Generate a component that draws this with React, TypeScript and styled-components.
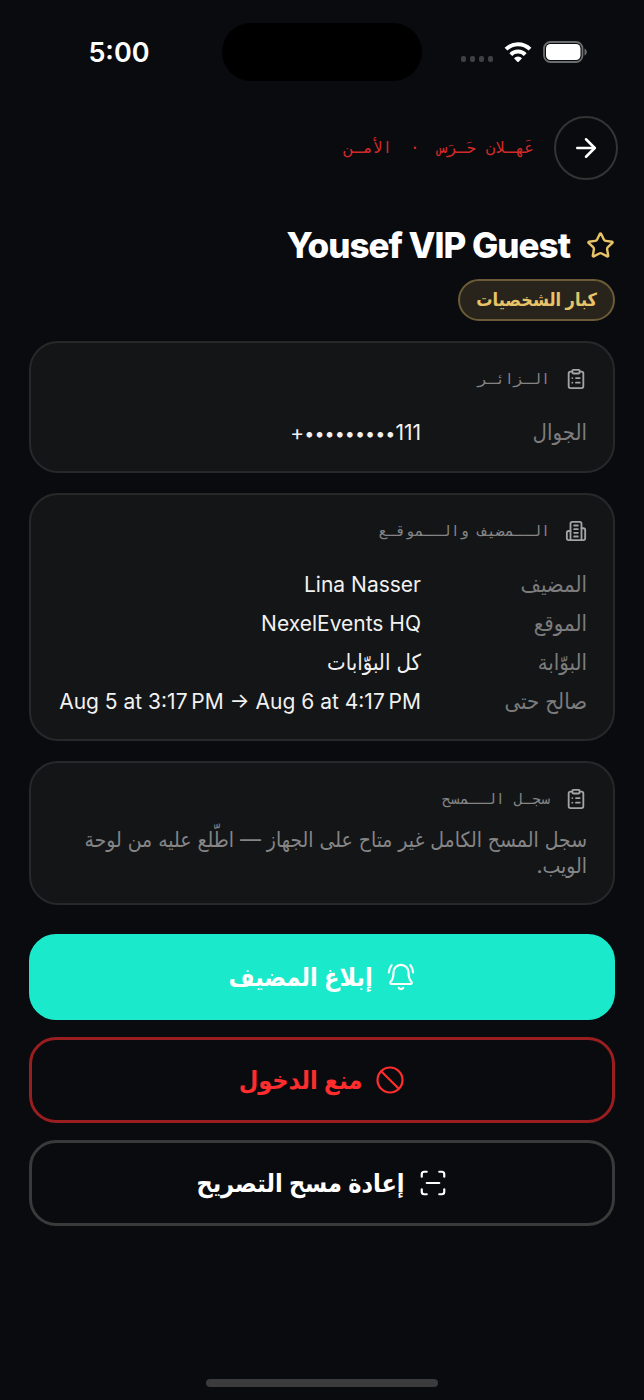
import React from "react";
import styled, { createGlobalStyle } from "styled-components";
import { ArrowRight, Ban, ClipboardList, ScanLine, Star } from "lucide-react";

const GlobalStyle = createGlobalStyle`
  *, *::before, *::after { box-sizing: border-box; }
  body {
    margin: 0;
    background: #0a0b0e;
    color: #f4f4f4;
    font-family: Inter, "DejaVu Sans Condensed", "DejaVu Sans", sans-serif;
  }
  h1, h2, p, dl, dd { margin: 0; }
`;

const Screen = styled.div`
  min-height: 100vh;
  display: flex;
  flex-direction: column;
`;

const StatusBar = styled.div`
  display: grid;
  grid-template-columns: 1fr 200px 1fr;
  align-items: center;
  padding-top: 23px;
`;

const Clock = styled.time`
  padding: 2px 0 0 16px;
  text-align: center;
  font-size: 27px;
  line-height: 32px;
  font-weight: 600;
  color: #fff;
`;

const Island = styled.div`
  height: 58px;
  border-radius: 29px;
  background: #000;
`;

const StatusIcons = styled.div`
  display: flex;
  align-items: center;
  justify-content: flex-end;
  gap: 11px;
  padding-right: 57px;
`;

const TopBar = styled.header`
  display: flex;
  align-items: center;
  gap: 20px;
  padding: 35px 26px 0;
`;

const BackButton = styled.button`
  display: grid;
  place-items: center;
  width: 64px;
  height: 64px;
  padding: 0;
  border: 2px solid #343434;
  border-radius: 50%;
  background: transparent;
  color: #fff;
`;

const Unit = styled.p`
  display: flex;
  gap: 18px;
  font-family: "DejaVu Sans Mono", monospace;
  font-size: 16px;
  line-height: 24px;
  color: #d32a2a;
`;

const Content = styled.main`
  display: flex;
  flex-direction: column;
  gap: 20px;
  padding: 45px 29px 0;
`;

const Identity = styled.section`
  display: flex;
  flex-direction: column;
  align-items: flex-start;
  gap: 14px;
`;

const NameLine = styled.div`
  display: flex;
  align-items: center;
  gap: 16px;
  color: #e8c468;
`;

const Name = styled.h1`
  font-size: 35px;
  line-height: 40px;
  font-weight: 800;
  letter-spacing: -1px;
  color: #fff;
`;

const Badge = styled.span`
  padding: 0 16px;
  border: 2px solid #6b5b36;
  border-radius: 21px;
  background: #28241c;
  color: #e8c468;
  font-size: 18px;
  line-height: 38px;
  font-weight: 600;
`;

const Card = styled.section`
  display: flex;
  flex-direction: column;
  gap: 16px;
  padding: 24px 26px 18px;
  border: 2px solid #27282a;
  border-radius: 29px;
  background: #141517;
`;

const CardHead = styled.div`
  display: flex;
  align-items: center;
  gap: 15px;
  color: #a4a4a5;
`;

const CardTitle = styled.h2`
  font-family: "DejaVu Sans Mono", monospace;
  font-size: 15px;
  line-height: 24px;
  font-weight: 400;
  color: #858586;
`;

const Facts = styled.dl`
  display: flex;
  flex-direction: column;
  padding-top: 6px;
`;

const Fact = styled.div`
  display: flex;
  gap: 20px;
  font-size: 22px;
  line-height: 39px;
  white-space: nowrap;
`;

const Term = styled.dt`
  width: 146px;
  flex: none;
  color: #7c7c7d;
`;

const Value = styled.dd<{ $latin?: boolean }>`
  font-size: ${(p) => (p.$latin ? 21 : 22)}px;
  color: #f1f1f1;
`;

const Mask = styled.span`
  font-size: 18px;
  font-feature-settings: "calt" 0;
`;

const Note = styled.p`
  padding-bottom: 6px;
  font-size: 21px;
  line-height: 26px;
  color: #858586;
`;

const Actions = styled.div`
  display: flex;
  flex-direction: column;
  gap: 17px;
  padding-top: 9px;
`;

const tones = {
  primary: { fill: "#1be9cb", edge: "#1be9cb", ink: "#ffffff" },
  danger: { fill: "transparent", edge: "#981e20", ink: "#ff2d2d" },
  plain: { fill: "transparent", edge: "#3a3a3b", ink: "#ffffff" },
};

const Action = styled.button<{ $tone: keyof typeof tones }>`
  display: flex;
  align-items: center;
  justify-content: center;
  gap: 13px;
  height: 86px;
  border: 3px solid ${(p) => tones[p.$tone].edge};
  border-radius: 27px;
  background: ${(p) => tones[p.$tone].fill};
  color: ${(p) => tones[p.$tone].ink};
  font-family: inherit;
  font-size: 25px;
  font-weight: 600;
`;

const HomeArea = styled.div`
  display: flex;
  justify-content: center;
  margin-top: auto;
  padding: 24px 0 13px;
`;

const HomeBar = styled.div`
  width: 36%;
  height: 8px;
  border-radius: 4px;
  background: #3b3b3d;
`;

function Signal() {
  return (
    <svg width="32" height="20" viewBox="0 0 32 20" fill="#3f4042" aria-hidden="true">
      {[0, 9, 18, 27].map((x) => (
        <rect key={x} x={x} y="14" width="5" height="6" rx="2" />
      ))}
    </svg>
  );
}

function Wifi() {
  return (
    <svg width="28" height="20" viewBox="0 0 28 20" aria-hidden="true">
      <g fill="none" stroke="#fff" strokeWidth="4">
        <path d="M2 7.2a17 17 0 0 1 24 0" />
        <path d="M6.8 12.600a10.200 10.200 0 0 1 14.400 0" />
      </g>
      <path d="M14 20.500l-4-4.300a5.800 5.800 0 0 1 8 0z" fill="#fff" />
    </svg>
  );
}

function Battery() {
  return (
    <svg width="44" height="22" viewBox="0 0 44 22" aria-hidden="true">
      <rect x="1" y="1" width="38.500" height="20" rx="6.500" fill="none" stroke="#6c6d6f" strokeWidth="1.800" />
      <rect x="3" y="3" width="34.500" height="16" rx="4.500" fill="#fff" />
      <path d="M41.500 7.500v7c1.400-.5 2.300-2 2.300-3.500s-.9-3-2.300-3.500z" fill="#6c6d6f" />
    </svg>
  );
}

function Lines({ size, stroke, paths }: { size: number; stroke: number; paths: string[] }) {
  return (
    <svg width={size} height={size} viewBox="0 0 24 24" fill="none" stroke="currentColor" strokeWidth={stroke} strokeLinecap="round" strokeLinejoin="round" aria-hidden="true">
      {paths.map((d) => (
        <path key={d} d={d} />
      ))}
    </svg>
  );
}

const buildingPaths = [
  "M6 22V4a2 2 0 0 1 2-2h8a2 2 0 0 1 2 2v18Z",
  "M6 12H4a2 2 0 0 0-2 2v6a2 2 0 0 0 2 2h2",
  "M18 9h2a2 2 0 0 1 2 2v9a2 2 0 0 1-2 2h-2",
  "M10 6h4",
  "M10 10h4",
  "M10 14h4",
  "M10 18h4",
];

const bellPaths = [
  "M12 2.300a6 6 0 0 0-6 6c0 4.300-.8 5.800-2.300 7.400-.7.800-.3 1.900.8 1.900h15c1.100 0 1.500-1.100.8-1.900-1.500-1.600-2.300-3.100-2.300-7.400a6 6 0 0 0-6-6Z",
  "M10.200 20.700a2.200 2.200 0 0 0 3.600 0",
  "M4.500 2.500C3.200 4.100 2.400 6 2.300 8.400",
  "M19.500 2.500c1.300 1.600 2.100 3.500 2.200 5.900",
];

const hostFacts = [
  { term: "المضيف", value: "Lina Nasser", latin: true },
  { term: "الموقع", value: "NexelEvents HQ", latin: true },
  { term: "البوّابة", value: "كل البوّابات", latin: false },
  { term: "صالح حتى", value: "Aug 5 at 3:17\u202fPM → Aug 6 at 4:17\u202fPM", latin: true },
];

export default function App() {
  return (
    <Screen dir="rtl" lang="ar">
      <GlobalStyle />
      <StatusBar dir="ltr">
        <Clock>5:00</Clock>
        <Island />
        <StatusIcons>
          <Signal />
          <Wifi />
          <Battery />
        </StatusIcons>
      </StatusBar>
      <TopBar>
        <BackButton type="button" aria-label="رجوع">
          <ArrowRight size={30} strokeWidth={2} />
        </BackButton>
        <Unit>
          <span>عَهـلان حَـرَس</span>
          <span>·</span>
          <span>الأمـن</span>
        </Unit>
      </TopBar>
      <Content>
        <Identity>
          <NameLine>
            <Star size={29} strokeWidth={2} />
            <Name dir="ltr">Yousef VIP Guest</Name>
          </NameLine>
          <Badge>كبار الشخصيات</Badge>
        </Identity>
        <Card>
          <CardHead>
            <ClipboardList size={22} strokeWidth={2} />
            <CardTitle>الـزائـر</CardTitle>
          </CardHead>
          <Facts>
            <Fact>
              <Term>الجوال</Term>
              <Value dir="ltr" $latin>
                +<Mask>•••••••••</Mask>111
              </Value>
            </Fact>
          </Facts>
        </Card>
        <Card>
          <CardHead>
            <Lines size={22} stroke={2} paths={buildingPaths} />
            <CardTitle>الــمضيف والــموقـع</CardTitle>
          </CardHead>
          <Facts>
            {hostFacts.map((f) => (
              <Fact key={f.term}>
                <Term>{f.term}</Term>
                <Value dir="auto" $latin={f.latin}>
                  {f.value}
                </Value>
              </Fact>
            ))}
          </Facts>
        </Card>
        <Card>
          <CardHead>
            <ClipboardList size={22} strokeWidth={2} />
            <CardTitle>سجـل الــمسح</CardTitle>
          </CardHead>
          <Note>سجل المسح الكامل غير متاح على الجهاز — اطّلع عليه من لوحة الويب.</Note>
        </Card>
        <Actions>
          <Action type="button" $tone="primary">
            <Lines size={30} stroke={1.75} paths={bellPaths} />
            إبلاغ المضيف
          </Action>
          <Action type="button" $tone="danger">
            <Ban size={30} strokeWidth={1.75} />
            منع الدخول
          </Action>
          <Action type="button" $tone="plain">
            <ScanLine size={30} strokeWidth={1.75} />
            إعادة مسح التصريح
          </Action>
        </Actions>
      </Content>
      <HomeArea>
        <HomeBar />
      </HomeArea>
    </Screen>
  );
}
